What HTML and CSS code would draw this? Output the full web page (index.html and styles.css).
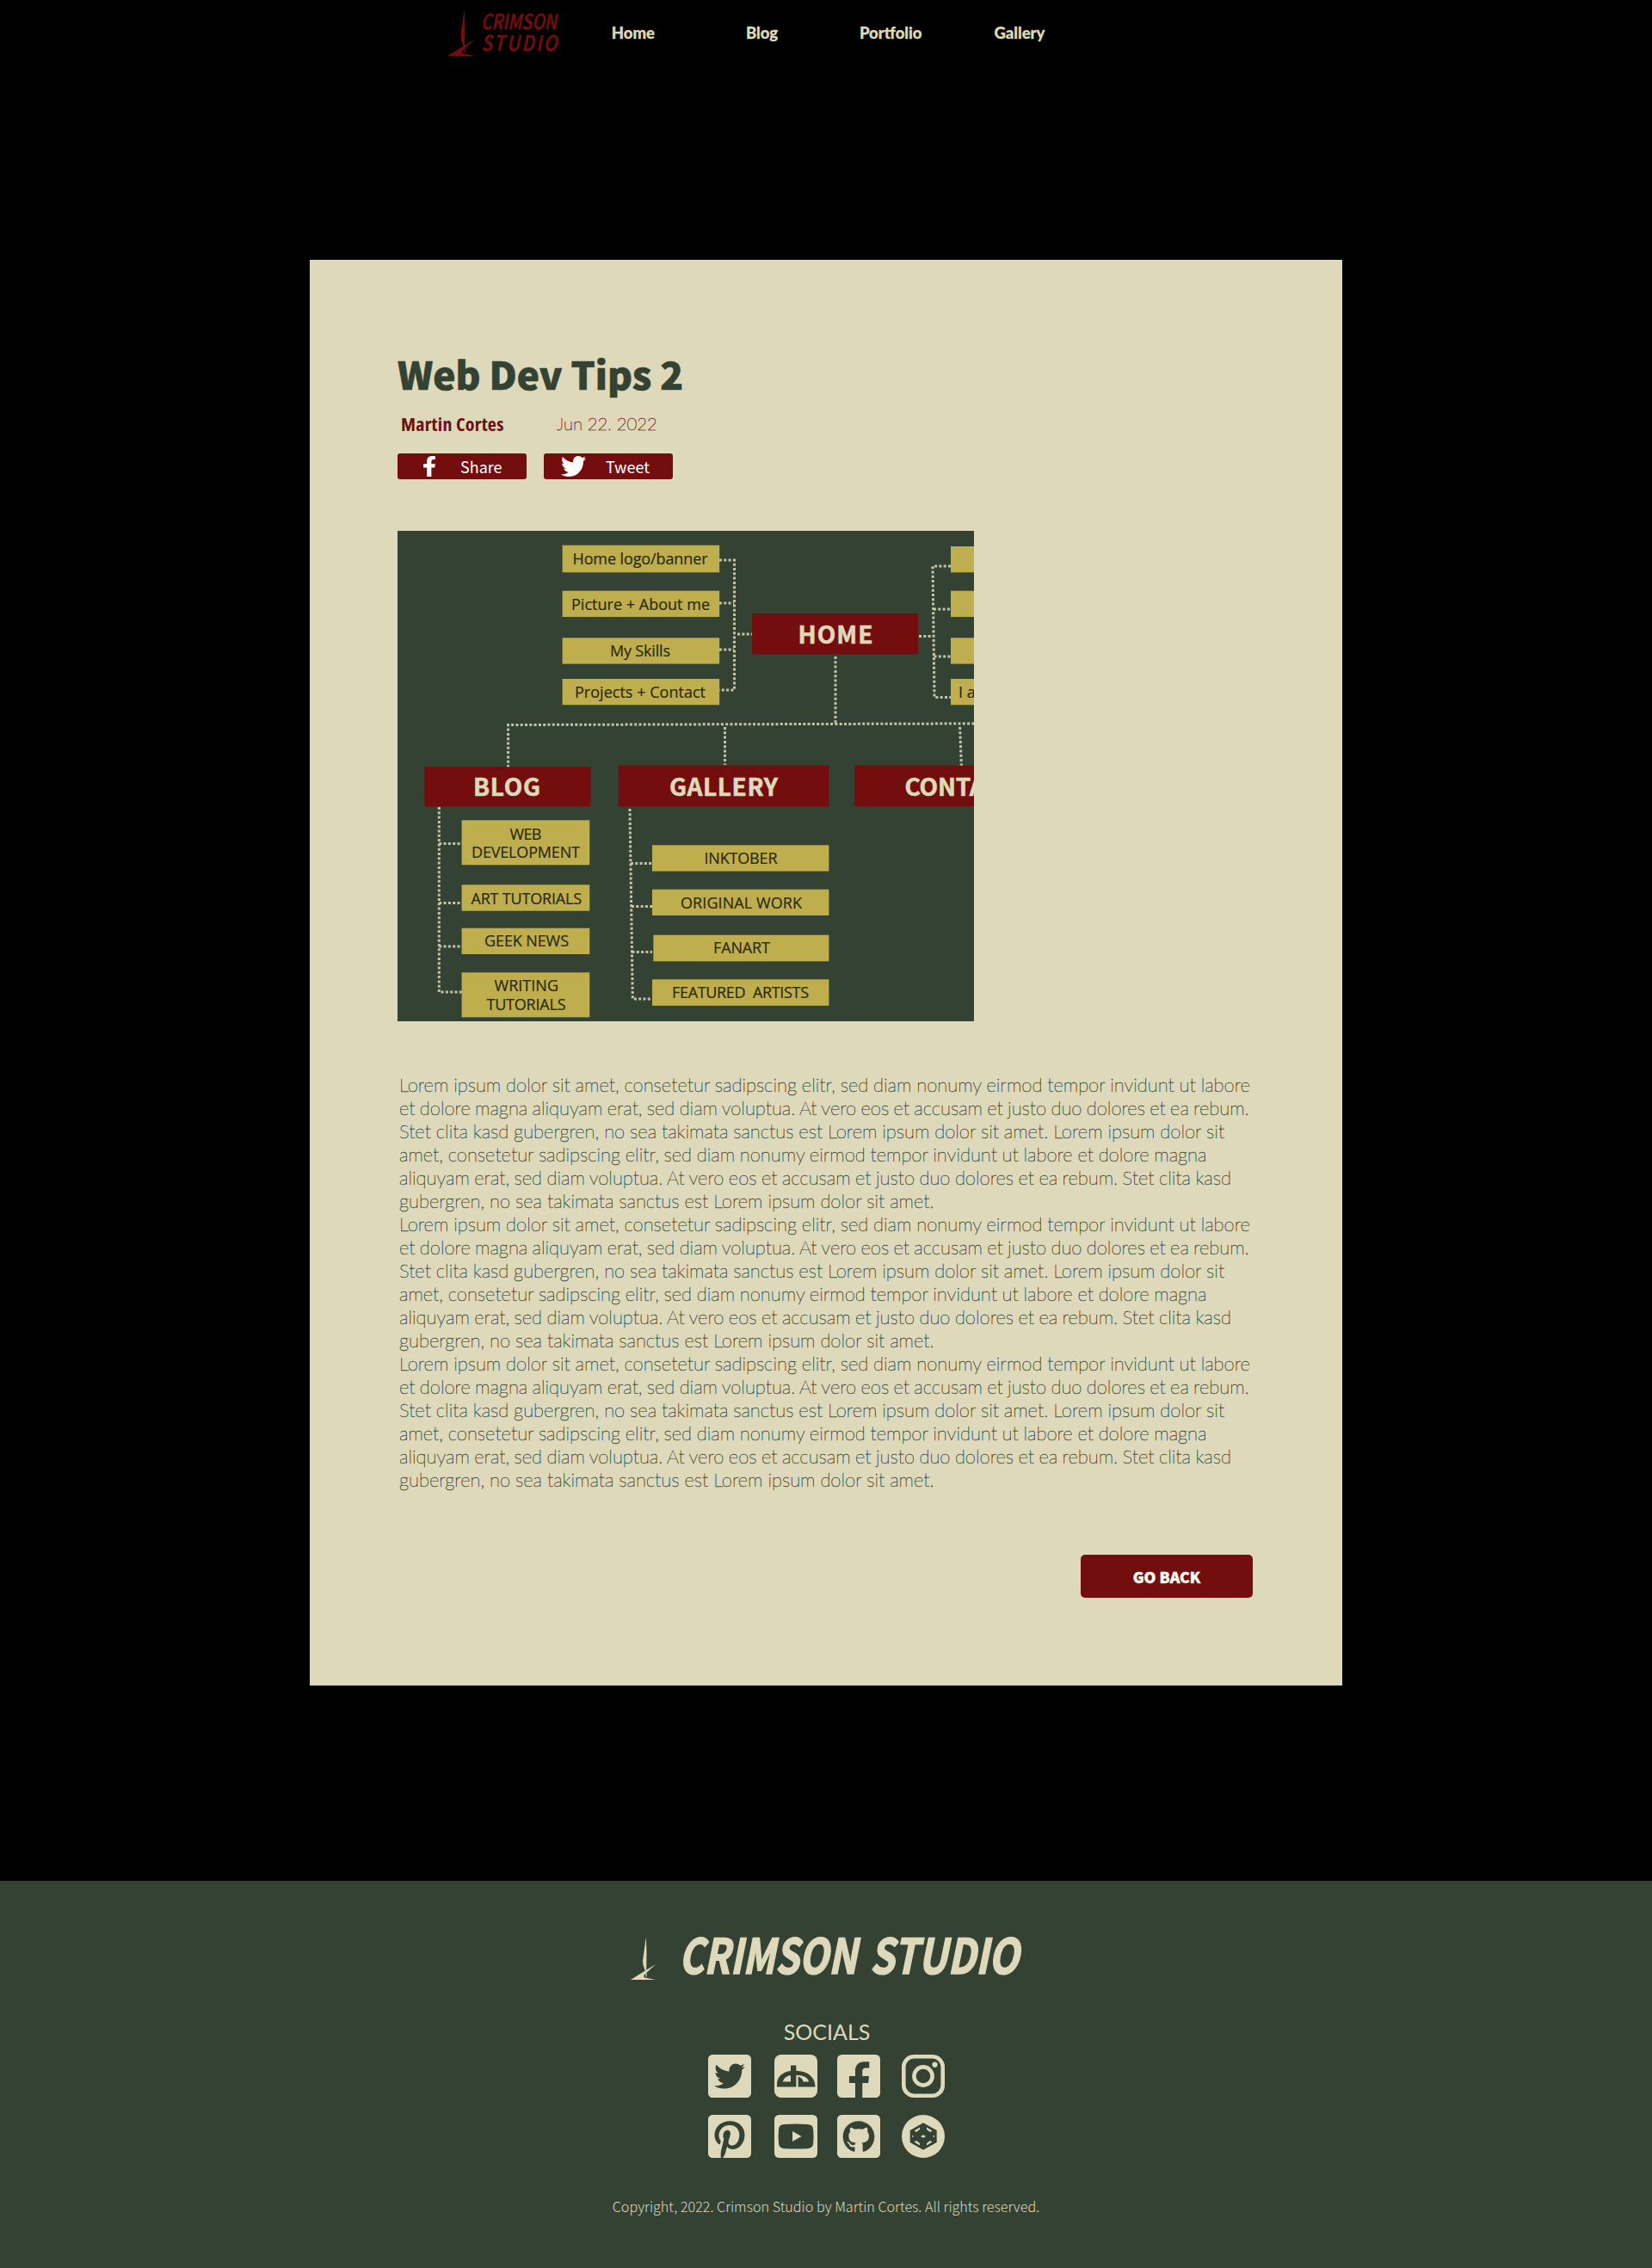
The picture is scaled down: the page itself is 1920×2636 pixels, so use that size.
FILE: index.html
```html
<!DOCTYPE html>
<html lang="en">
<head>
<meta charset="utf-8">
<title>Web Dev Tips 2 - Crimson Studio</title>
<link rel="stylesheet" href="styles.css">
</head>
<body>
<svg width="0" height="0" class="defs" aria-hidden="true">
  <symbol id="boat" viewBox="0 0 94 161" preserveAspectRatio="none">
    <path d="M58 0L46 85Q45 96 48 108L56 133L57 150L61 150L59 127L60 60ZM94 103L0 161H94L53 153Q46 150 52 142Z"/>
  </symbol>
</svg>
<header class="header">
  <a class="brand" href="#">
    <svg class="brand-boat" width="32" height="54"><use href="#boat"/></svg>
    <svg class="brand-name" width="96" height="56" viewBox="0 0 96 56">
      <text class="brush" x="-1" y="20" font-size="24.500" textLength="88" lengthAdjust="spacingAndGlyphs">CRIMSON</text>
      <text class="brush" transform="scale(.85 1)" x="-1" y="45" font-size="24.500" textLength="104">STUDIO</text>
    </svg>
  </a>
  <nav class="nav">
    <a href="#">Home</a>
    <a href="#">Blog</a>
    <a href="#">Portfolio</a>
    <a href="#">Gallery</a>
  </nav>
</header>

<main class="post">
  <h1>Web Dev Tips 2</h1>
  <div class="meta">
    <span class="author">Martin Cortes</span>
    <span class="date">Jun 22. 2022</span>
  </div>
  <div class="share">
    <a class="share-btn" href="#"><svg width="14" height="24" viewBox="22 0 272 512" preserveAspectRatio="none"><path d="M279 288l14-93h-89v-60c0-25 12-50 52-50h37V6S260 0 225 0c-73 0-121 44-121 125v70H23v93h81v224h100V288z"/></svg><span>Share</span></a>
    <a class="share-btn tweet" href="#"><svg width="29" height="24" viewBox="0 48 512 416" preserveAspectRatio="none"><path d="M459.37 151.716c.325 4.548.325 9.097.325 13.645 0 138.72-105.583 298.558-298.558 298.558-59.452 0-114.68-17.219-161.137-47.106 8.447.974 16.568 1.299 25.34 1.299 49.055 0 94.213-16.568 130.274-44.832-46.132-.975-84.792-31.188-98.112-72.772 6.498.974 12.995 1.624 19.818 1.624 9.421 0 18.843-1.3 27.614-3.573-48.081-9.747-84.143-51.98-84.143-102.985v-1.299c13.969 7.797 30.214 12.67 47.431 13.319-28.264-18.843-46.781-51.005-46.781-87.391 0-19.492 5.197-37.36 14.294-52.954 51.655 63.675 129.3 105.258 216.365 109.807-1.624-7.797-2.599-15.918-2.599-24.04 0-57.828 46.782-104.934 104.934-104.934 30.213 0 57.502 12.67 76.67 33.137 23.715-4.548 46.456-13.32 66.599-25.34-7.798 24.366-24.366 44.833-46.132 57.827 21.117-2.273 41.584-8.122 60.426-16.243-14.292 20.791-32.161 39.308-52.628 54.253z"/></svg><span>Tweet</span></a>
  </div>

  <svg class="sitemap" width="670" height="570" viewBox="0 0 670 570">
    <rect width="670" height="570" fill="#334233"/>
    <g class="links">
      <path d="M374 34H391.500V185H374M374 84H391M374 138H391M395 120H412"/>
      <path d="M606 122.500H622M643 41H622L624 193.500H643M623 91H643M623.500 146H643"/>
      <path d="M509 146V225M128.600 275V225.500L670 224M380.500 228V272M653.600 228L655.400 273"/>
      <path d="M48.300 321V536H75M48.300 363.500H75M48.300 432.500H75M48.300 483H75"/>
      <path d="M270 323L273.300 544H296M271 386.500H296M272 436.500H296M272.500 489.500H296"/>
    </g>
    <g fill="#740e0e">
      <rect x="412" y="96" width="193" height="47.500"/>
      <rect x="31.300" y="274.300" width="193.300" height="46"/>
      <rect x="256.800" y="272.700" width="244.600" height="47.600"/>
      <rect x="531.300" y="272.700" width="200" height="47.600"/>
    </g>
    <g fill="#bfae4d">
      <rect x="191.600" y="16.700" width="182.600" height="31.600"/>
      <rect x="191.600" y="69.700" width="182.600" height="30.300"/>
      <rect x="191.600" y="124.300" width="182.600" height="30.300"/>
      <rect x="191.600" y="172" width="182.600" height="30.300"/>
      <rect x="643" y="18" width="60" height="30.300"/>
      <rect x="643" y="69.700" width="60" height="30.300"/>
      <rect x="643" y="124.300" width="60" height="30.300"/>
      <rect x="643" y="172" width="60" height="30.300"/>
      <rect x="74.600" y="336.300" width="148.700" height="52"/>
      <rect x="74.600" y="411.300" width="148.700" height="30.400"/>
      <rect x="74.600" y="461.700" width="148.700" height="30.300"/>
      <rect x="74.600" y="513.300" width="148.700" height="52"/>
      <rect x="296" y="365.300" width="205.400" height="30.300"/>
      <rect x="296" y="416.700" width="205.400" height="30.300"/>
      <rect x="297.400" y="469.700" width="204" height="30.600"/>
      <rect x="296" y="521.300" width="205.400" height="30.600"/>
    </g>
    <g class="heads">
      <text x="465.500" y="130.700" textLength="87">HOME</text>
      <text x="88" y="308" textLength="78">BLOG</text>
      <text x="316" y="308" textLength="126">GALLERY</text>
      <text x="589.500" y="308" textLength="128">CONTACT</text>
    </g>
    <g class="items">
      <text x="203.500" y="39" textLength="157">Home logo/banner</text>
      <text x="202" y="91.500" textLength="161">Picture + About me</text>
      <text x="247" y="145.700" textLength="70">My Skills</text>
      <text x="206" y="193.500" textLength="152">Projects + Contact</text>
      <text x="652" y="193.500">I am</text>
      <text x="130.500" y="358.500" textLength="37">WEB</text>
      <text x="86" y="380.300" textLength="126">DEVELOPMENT</text>
      <text x="85.500" y="433.500" textLength="128.500">ART TUTORIALS</text>
      <text x="101" y="483.300" textLength="98">GEEK NEWS</text>
      <text x="112.500" y="535" textLength="74.500">WRITING</text>
      <text x="103.500" y="557" textLength="92">TUTORIALS</text>
      <text x="356.500" y="387" textLength="85">INKTOBER</text>
      <text x="329" y="438.700" textLength="141">ORIGINAL WORK</text>
      <text x="367" y="491.300" textLength="66">FANART</text>
      <text x="319" y="543" textLength="159">FEATURED&#160; ARTISTS</text>
    </g>
  </svg>

  <div class="body-text">
    <p>
      <span class="l1">Lorem ipsum dolor sit amet, consetetur sadipscing elitr, sed diam nonumy eirmod tempor invidunt ut labore</span>
      <span class="l2">et dolore magna aliquyam erat, sed diam voluptua. At vero eos et accusam et justo duo dolores et ea rebum.</span>
      <span class="l3">Stet clita kasd gubergren, no sea takimata sanctus est Lorem ipsum dolor sit amet. Lorem ipsum dolor sit</span>
      <span class="l4">amet, consetetur sadipscing elitr, sed diam nonumy eirmod tempor invidunt ut labore et dolore magna</span>
      <span class="l5">aliquyam erat, sed diam voluptua. At vero eos et accusam et justo duo dolores et ea rebum. Stet clita kasd</span>
      <span class="l6">gubergren, no sea takimata sanctus est Lorem ipsum dolor sit amet.</span>
    </p>
    <p>
      <span class="l1">Lorem ipsum dolor sit amet, consetetur sadipscing elitr, sed diam nonumy eirmod tempor invidunt ut labore</span>
      <span class="l2">et dolore magna aliquyam erat, sed diam voluptua. At vero eos et accusam et justo duo dolores et ea rebum.</span>
      <span class="l3">Stet clita kasd gubergren, no sea takimata sanctus est Lorem ipsum dolor sit amet. Lorem ipsum dolor sit</span>
      <span class="l4">amet, consetetur sadipscing elitr, sed diam nonumy eirmod tempor invidunt ut labore et dolore magna</span>
      <span class="l5">aliquyam erat, sed diam voluptua. At vero eos et accusam et justo duo dolores et ea rebum. Stet clita kasd</span>
      <span class="l6">gubergren, no sea takimata sanctus est Lorem ipsum dolor sit amet.</span>
    </p>
    <p>
      <span class="l1">Lorem ipsum dolor sit amet, consetetur sadipscing elitr, sed diam nonumy eirmod tempor invidunt ut labore</span>
      <span class="l2">et dolore magna aliquyam erat, sed diam voluptua. At vero eos et accusam et justo duo dolores et ea rebum.</span>
      <span class="l3">Stet clita kasd gubergren, no sea takimata sanctus est Lorem ipsum dolor sit amet. Lorem ipsum dolor sit</span>
      <span class="l4">amet, consetetur sadipscing elitr, sed diam nonumy eirmod tempor invidunt ut labore et dolore magna</span>
      <span class="l5">aliquyam erat, sed diam voluptua. At vero eos et accusam et justo duo dolores et ea rebum. Stet clita kasd</span>
      <span class="l6">gubergren, no sea takimata sanctus est Lorem ipsum dolor sit amet.</span>
    </p>
  </div>
  <a class="back" href="#">GO BACK</a>
</main>

<footer class="footer">
  <div class="footer-brand">
    <svg class="footer-boat" width="29" height="50"><use href="#boat"/></svg>
    <svg class="footer-name" width="400" height="60" viewBox="0 0 400 60">
      <text class="brush" x="-3" y="43" font-size="56" textLength="207" lengthAdjust="spacingAndGlyphs">CRIMSON</text>
      <text class="brush" x="219" y="43" font-size="56" textLength="173" lengthAdjust="spacingAndGlyphs">STUDIO</text>
    </svg>
  </div>
  <h2>SOCIALS</h2>
  <div class="socials">
    <svg viewBox="0 32 448 448" preserveAspectRatio="none"><path d="M400 32H48C21.500 32 0 53.500 0 80v352c0 26.500 21.500 48 48 48h352c26.500 0 48-21.500 48-48V80c0-26.500-21.500-48-48-48zm-48.900 158.800c.2 2.800.2 5.700.2 8.500 0 86.700-66 186.600-186.600 186.600-37.200 0-71.700-10.800-100.700-29.400 5.300.6 10.400.8 15.800.8 30.700 0 58.900-10.400 81.400-28-28.800-.6-53-19.500-61.300-45.500 10.100 1.500 19.200 1.500 29.600-1.200-30-6.100-52.500-32.500-52.500-64.400v-.8c8.700 4.900 18.900 7.900 29.600 8.300a65.447 65.447 0 0 1-29.200-54.600c0-12.200 3.200-23.400 8.900-33.100 32.300 39.800 80.800 65.800 135.200 68.600-9.300-44.500 24-80.600 64-80.600 18.900 0 35.900 7.900 47.900 20.700 14.800-2.800 29-8.300 41.600-15.800-4.900 15.200-15.200 28-28.800 36.100 13.200-1.400 26-5.100 37.800-10.200-8.900 13.100-20.100 24.700-32.900 34z"/></svg>
    <svg viewBox="0 0 50 50"><rect width="50" height="50" rx="8"/><g class="cut"><path fill-rule="evenodd" d="M19 12.500h6.300V37.500H3V35C3 26 9 20 19 19zM19 24C13.500 25 10.500 28 10 31.500H19z"/><path fill-rule="evenodd" d="M25 18.700C39 19 47.500 26 47.500 37.500H27.700V25.500C31 26.500 33.500 29 33.500 31.500H40C39 26.500 34 23.700 25 23.700z"/></g></svg>
    <svg viewBox="0 32 448 448" preserveAspectRatio="none"><path d="M400 32H48A48 48 0 0 0 0 80v352a48 48 0 0 0 48 48h140V327.690h-63V256h63v-54.640c0-62.150 37-96.480 93.670-96.480 27.140 0 52 1 52 1v64h-31.270c-30.810 0-40.420 15-40.420 34V256h70l-8 71.690h-62V480H400a48 48 0 0 0 48-48V80a48 48 0 0 0-48-48z"/></svg>
    <svg viewBox="0 0 50 50"><rect class="ring" x="2.300" y="2.300" width="45.400" height="45.400" rx="12"/><circle class="ring" cx="25" cy="25" r="10.600"/><circle cx="38.500" cy="11.700" r="3.100"/></svg>
    <svg viewBox="0 32 448 448" preserveAspectRatio="none"><path d="M448 80v352c0 26.500-21.500 48-48 48H154.400c9.800-16.400 22.400-40 27.400-59.300 3-11.500 15.300-58.400 15.300-58.400 8 15.300 31.400 28.200 56.300 28.200 74.100 0 127.400-68.100 127.400-152.700 0-81.100-66.200-141.800-151.400-141.800-106 0-162.200 71.100-162.200 148.600 0 36 19.200 80.800 49.800 95.100 4.700 2.200 7.100 1.200 8.200-3.300.8-3.400 5-20.100 6.800-27.800.6-2.500.3-4.600-1.700-7-10.100-12.300-18.300-34.900-18.300-56 0-54.200 41-106.600 110.900-106.600 60.300 0 102.600 41.100 102.600 99.900 0 66.400-33.500 112.400-77.200 112.400-24.100 0-42.100-19.900-36.400-44.400 6.900-29.200 20.300-60.700 20.300-81.800 0-53-75.500-45.700-75.500 25 0 21.700 7.300 36.500 7.300 36.500-31.400 132.800-36.100 134.500-29.600 192.600l2.200.8H48c-26.500 0-48-21.500-48-48V80c0-26.500 21.500-48 48-48h352c26.500 0 48 21.500 48 48z"/></svg>
    <svg viewBox="0 0 50 50"><rect width="50" height="50" rx="5.500"/><path class="cut" d="M12 11Q25 10 38 11Q45 11 45.200 17Q46 25 45.200 33Q45 39 38 39.200Q25 40 12 39.200Q5.200 39 5 33Q4.200 25 5 17Q5 11 12 11Z"/><path d="M21 19L31.500 25L21 31Z"/></svg>
    <svg viewBox="0 32 448 448" preserveAspectRatio="none"><path d="M400 32H48C21.500 32 0 53.500 0 80v352c0 26.500 21.500 48 48 48h352c26.500 0 48-21.500 48-48V80c0-26.500-21.500-48-48-48zM277.300 415.700c-8.400 1.500-11.500-3.700-11.500-8 0-5.400.2-33 .2-55.300 0-15.600-5.200-25.500-11.300-30.700 37-4.100 76-9.200 76-73.100 0-18.200-6.500-27.300-17.100-39 1.700-4.300 7.400-22-1.700-45-13.900-4.300-45.700 17.900-45.700 17.900-13.200-3.700-27.500-5.600-41.600-5.600-14.100 0-28.400 1.900-41.600 5.600 0 0-31.800-22.200-45.700-17.900-9.100 22.900-3.500 40.600-1.700 45-10.600 11.700-15.600 20.800-15.600 39 0 63.600 37.300 69 74.300 73.100-4.800 4.300-9.100 11.700-10.600 22.300-9.500 4.300-33.800 11.700-48.300-13.900-9.100-15.800-25.500-17.100-25.500-17.100-16.200-.2-1.100 10.200-1.100 10.200 10.800 5 18.400 24.200 18.400 24.200 9.700 29.700 56.100 19.700 56.100 19.700 0 13.900.2 36.500.2 40.600 0 4.300-3 9.500-11.500 8-66-22.100-112.200-84.900-112.200-158.300 0-91.800 70.200-161.500 162-161.500S388 165.600 388 257.400c.1 73.400-44.700 136.300-110.700 158.300z"/></svg>
    <svg viewBox="0 0 50 50"><circle cx="25" cy="25" r="25"/><path class="cut" d="M25 9.300L40.700 18V32L25 40.700L9.700 32V18Z"/><path d="M21 14.500V17L17 20L14.500 18.500ZM29 14.500V17L33 20L35.500 18.500ZM21 35.500V33L17 30L14.500 31.500ZM29 35.500V33L33 30L35.500 31.500ZM22 25L25 23.200L28 25L25 26.800ZM12.300 23.500L14 25L12.300 26.500ZM37.700 23.500L36 25L37.700 26.500Z"/></svg>
  </div>
  <p class="copyright">Copyright, 2022. Crimson Studio by Martin Cortes. All rights reserved.</p>
</footer>
</body>
</html>
```
FILE: styles.css
```css
* { box-sizing: border-box; }

body {
  margin: 0;
  background: #000;
  color: #334233;
  font-family: Lato, sans-serif;
}

a { color: inherit; text-decoration: none; }
h1, h2, p { margin: 0; }
.defs { display: block; height: 0; }

.header {
  display: flex;
  height: 90px;
  padding-left: 520px;
  color: #ded9bb;
}
.brand {
  display: flex;
  width: 141px;
  color: #740e0e;
}
.brand svg { fill: currentColor; }
.brand-boat { margin-top: 11px; }
.brand-name { margin: 14px 0 0 8px; overflow: visible; }
.brush {
  font-family: "Noto Sans CJK JP", sans-serif;
  font-style: italic;
  font-weight: 700;
}
.brand .brush { font-weight: 500; stroke: #740e0e; stroke-width: .5; }

.nav {
  display: flex;
  height: 76px;
  font-size: 18.5px;
  font-weight: 900;
  -webkit-text-stroke: .3px #ded9bb;
}
.nav a {
  width: 149.7px;
  line-height: 76px;
  text-align: center;
}

.post {
  display: flex;
  flex-direction: column;
  width: 1200px;
  height: 1657px;
  margin: 212px auto 227px;
  padding: 99px 102px 0;
  background: #ded9bb;
}
h1 {
  height: 69px;
  font: 900 44.1px/66px "Noto Sans CJK JP", sans-serif;
  -webkit-text-stroke: .7px #334233;
}
.meta {
  display: flex;
  height: 42px;
  padding-left: 4px;
  color: #740e0e;
  line-height: 44px;
}
.author {
  width: 181px;
  font-family: "Open Sans", sans-serif;
  font-size: 22px;
  font-weight: 700;
  font-stretch: 75%;
  letter-spacing: .25px;
}
.date {
  font-size: 20.3px;
  font-weight: 100;
  -webkit-text-stroke: .4px #740e0e;
}
.share {
  display: flex;
  gap: 20px;
  margin-top: 15px;
}
.share-btn {
  display: flex;
  align-items: center;
  width: 150px;
  height: 30px;
  padding-left: 30px;
  border-radius: 3px;
  background: #740e0e;
  color: #fff;
  font: 400 18px/30px "Noto Sans CJK JP", sans-serif;
}
.share-btn svg { fill: #fff; }
.share-btn span { margin-left: 29px; }
.tweet { padding-left: 20px; }
.tweet span { margin-left: 23px; }

.sitemap {
  display: block;
  margin-top: 60px;
}
.links path {
  fill: none;
  stroke: #ded9bb;
  stroke-width: 3;
  stroke-dasharray: 3 2.3;
  opacity: .85;
}
.heads text {
  fill: #ded9bb;
  stroke: #ded9bb;
  stroke-width: .6;
  font: 700 28px "Noto Sans CJK JP", sans-serif;
}
.items text {
  fill: #2b2a12;
  stroke: #2b2a12;
  stroke-width: .2;
  font: 400 18px "Open Sans", sans-serif;
}

.body-text {
  margin: 60px 0 0 2px;
  font-size: 22px;
  font-weight: 100;
  line-height: 27px;
  white-space: nowrap;
  -webkit-text-stroke: .4px #334233;
}
.body-text span { display: block; }
.l1 { word-spacing: -.42px; }
.l2 { word-spacing: -.97px; }
.l3 { word-spacing: -.37px; }
.l4 { word-spacing: -.56px; }
.l5 { word-spacing: -.84px; }
.l6 { word-spacing: -.33px; }

.back {
  align-self: flex-end;
  width: 200px;
  height: 50px;
  margin: 74px 2px 0 0;
  border-radius: 5px;
  background: #740e0e;
  color: #fff;
  font: 900 17.6px/51px "Noto Sans CJK JP", sans-serif;
  text-align: center;
  -webkit-text-stroke: .4px #fff;
}

.footer {
  display: flex;
  flex-direction: column;
  align-items: center;
  height: 450px;
  padding-top: 65px;
  background: #334233;
  color: #ded9bb;
}
.footer svg { fill: #ded9bb; }
.footer-brand {
  display: flex;
  gap: 30px;
  height: 86px;
  padding-left: 4px;
}
.footer-name { overflow: visible; stroke: #ded9bb; stroke-width: 1.6; }
.footer h2 {
  height: 51px;
  padding-left: 2px;
  font-size: 25px;
  font-weight: 400;
  line-height: 49px;
}
.socials {
  display: grid;
  grid-template-columns: 77px 73px 75px 50px;
  row-gap: 20px;
}
.socials svg { display: block; width: 50px; height: 50px; }
.socials .cut { fill: #334233; }
.socials .ring { fill: none; stroke: #ded9bb; stroke-width: 4.6; }
.copyright {
  margin-top: 44px;
  font: 300 16.15px/24px "Noto Sans CJK JP", sans-serif;
}
```
